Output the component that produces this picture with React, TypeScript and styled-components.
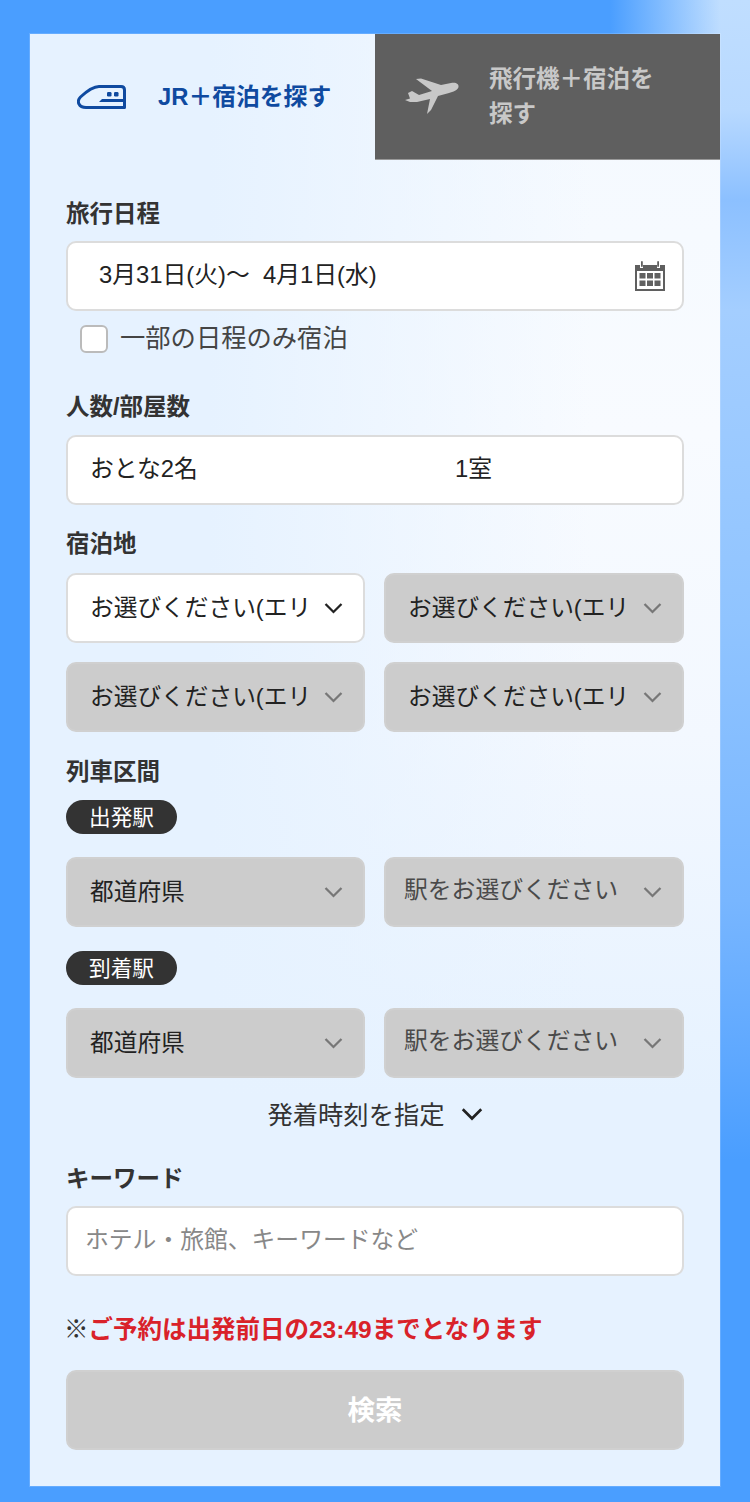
import React from "react";
import styled, { createGlobalStyle } from "styled-components";

const GlobalStyle = createGlobalStyle`
  html, body {
    margin: 0;
    padding: 0;
  }
  body {
    font-family: "Liberation Sans", "Noto Sans CJK JP", sans-serif;
    color: #333;
  }
  * {
    box-sizing: border-box;
  }
  svg {
    flex-shrink: 0;
  }
`;

const TrainIcon = () => (
  <svg width="50" height="26" viewBox="0 0 50 26" fill="none">
    <path
      d="M44 2.500H22C16 2.500 10 7 3.500 13C1 15.500 1 18 2 20C3.500 23 6 23.500 9 23.500H47.500V6C47.500 3.500 46 2.500 44 2.500z"
      stroke="#0f4aa0"
      strokeWidth="3"
      strokeLinejoin="round"
    />
    <path d="M25 15h23v3H22z" fill="#0f4aa0" />
    <rect x="30" y="8" width="4.500" height="4.500" rx="1.200" fill="#0f4aa0" />
    <rect x="37" y="8" width="4.500" height="4.500" rx="1.200" fill="#0f4aa0" />
  </svg>
);

const PlaneIcon = () => (
  <svg width="54" height="38" viewBox="0 0 54 38" fill="#c8c8c8">
    <path d="M11 1L16 .5 36 7l10-2C51 4 54 6 53.500 9 53 12 48 14 44 15l-11 3-7 14-4 4 3-15-13 3H5l-5-2 5-1.500L3 15l4-2 7 4 13-4z" />
  </svg>
);

const CalendarIcon = () => (
  <svg width="30" height="30" viewBox="0 0 30 30">
    <path d="M0 4h5v3h3V4h14v3h3V4h5v26H0z" fill="#5f5f5f" />
    <rect x="6" y="0" width="1.800" height="6" rx="0.900" fill="#5f5f5f" />
    <rect x="22.200" y="0" width="1.800" height="6" rx="0.900" fill="#5f5f5f" />
    <rect x="2" y="10" width="26" height="18" fill="#fff" />
    {[4.500, 12, 19.500].flatMap((x) =>
      [12, 19.500].map((y) => (
        <rect key={`${x}-${y}`} x={x} y={y} width="6" height="5.500" fill="#5f5f5f" />
      ))
    )}
  </svg>
);

const Chevron = ({ color = "#222", width = 19 }: { color?: string; width?: number }) => (
  <svg width={width} height={width * 0.63} viewBox="0 0 19 12" fill="none">
    <path d="M1.500 2l8 8 8-8" stroke={color} strokeWidth="2.300" />
  </svg>
);

const SelectBox = ({ label, disabled, muted }: { label: string; disabled?: boolean; muted?: boolean }) => (
  <Select $disabled={disabled}>
    <SelectText $muted={muted}>{label}</SelectText>
    <Chevron color={disabled ? "#777" : "#222"} />
  </Select>
);

const AREA = "お選びください(エリ";

export default function App() {
  return (
    <Page>
      <GlobalStyle />
      <Panel>
        <Tabs>
          <ActiveTab>
            <TrainIcon />
            <ActiveTabLabel>JR＋宿泊を探す</ActiveTabLabel>
          </ActiveTab>
          <InactiveTab>
            <PlaneIcon />
            <InactiveTabLabel>飛行機＋宿泊を探す</InactiveTabLabel>
          </InactiveTab>
        </Tabs>
        <Form>
          <Label>旅行日程</Label>
          <DateField>
            <FieldText>3月31日(火)～  4月1日(水)</FieldText>
            <CalendarIcon />
          </DateField>
          <CheckRow>
            <CheckBox />
            <CheckLabel>一部の日程のみ宿泊</CheckLabel>
          </CheckRow>

          <PeopleLabel>人数/部屋数</PeopleLabel>
          <PeopleField>
            <PeopleCount>おとな2名</PeopleCount>
            <FieldText>1室</FieldText>
          </PeopleField>

          <AreaLabel>宿泊地</AreaLabel>
          <SelectGrid>
            <SelectBox label={AREA} />
            <SelectBox label={AREA} disabled />
            <SelectBox label={AREA} disabled />
            <SelectBox label={AREA} disabled />
          </SelectGrid>

          <TrainLabel>列車区間</TrainLabel>
          <Pill>出発駅</Pill>
          <SelectGrid>
            <SelectBox label="都道府県" disabled />
            <SelectBox label="駅をお選びください" disabled muted />
          </SelectGrid>
          <ArrivalPill>到着駅</ArrivalPill>
          <SelectGrid>
            <SelectBox label="都道府県" disabled />
            <SelectBox label="駅をお選びください" disabled muted />
          </SelectGrid>

          <TimeToggle>
            <TimeToggleText>発着時刻を指定</TimeToggleText>
            <Chevron width={22} />
          </TimeToggle>

          <KeywordLabel>キーワード</KeywordLabel>
          <KeywordField>
            <FieldText>ホテル・旅館、キーワードなど</FieldText>
          </KeywordField>

          <Notice>
            ※<NoticeRed>ご予約は出発前日の23:49までとなります</NoticeRed>
          </Notice>
          <SearchButton>検索</SearchButton>
        </Form>
      </Panel>
    </Page>
  );
}

const Page = styled.div`
  width: 750px;
  height: 1502px;
  padding: 34px 30px 16px;
  overflow: hidden;
  background:
    linear-gradient(to right, #4a9eff 610px, rgba(74, 158, 255, 0) 720px),
    linear-gradient(
      to bottom,
      #c0deff 0,
      #b8d9ff 110px,
      #8cc0ff 200px,
      #a4ceff 310px,
      #90c4ff 620px,
      #78b6ff 900px,
      #5ea8ff 1060px,
      #4a9eff 1160px
    );
`;

const Panel = styled.div`
  width: 690px;
  height: 1452px;
  box-shadow: 0 0 0 1px rgba(255, 255, 255, 0.15);
  background:
    linear-gradient(to right, #e6f2ff 180px, rgba(230, 242, 255, 0) 560px),
    linear-gradient(to bottom, #f4f9ff 0, #f8fbff 400px, #f3f8ff 700px, #e6f2ff 1060px);
`;

const Tabs = styled.div`
  display: flex;
  height: 126px;
`;

const ActiveTab = styled.div`
  display: flex;
  align-items: center;
  width: 345px;
  padding-left: 47px;
  gap: 31px;
`;

const ActiveTabLabel = styled.span`
  padding-bottom: 5px;
  font-size: 23.800px;
  font-weight: 700;
  color: #0f4aa0;
`;

const InactiveTab = styled.div`
  display: flex;
  align-items: center;
  width: 345px;
  padding-left: 30px;
  gap: 30px;
  background: #5f5f5f;
  border-bottom: 1px solid #999;
`;

const InactiveTabLabel = styled.span`
  width: 180px;
  font-size: 23.500px;
  font-weight: 700;
  line-height: 35px;
  color: #c8c8c8;
`;

const Form = styled.div`
  padding: 37px 36px 0;
`;

const Label = styled.div`
  height: 34px;
  font-size: 23.500px;
  line-height: 34px;
  font-weight: 700;
  color: #333;
`;

const PeopleLabel = styled(Label)`
  margin-top: 30px;
  margin-bottom: 11px;
`;

const AreaLabel = styled(Label)`
  margin-top: 22px;
  margin-bottom: 12px;
`;

const TrainLabel = styled(Label)`
  margin-top: 23px;
  margin-bottom: 11px;
`;

const KeywordLabel = styled(Label)`
  margin-top: 29px;
  margin-bottom: 10px;
`;

const Field = styled.div`
  display: flex;
  align-items: center;
  height: 70px;
  background: #fff;
  border: 2px solid #dcdcdc;
  border-radius: 10px;
  font-size: 23.800px;
  color: #222;
`;

const FieldText = styled.span`
  padding-bottom: 8px;
  white-space: pre;
`;

const DateField = styled(Field)`
  justify-content: space-between;
  margin-top: 10px;
  padding: 0 17px 0 31px;
`;

const CheckRow = styled.label`
  display: flex;
  align-items: center;
  gap: 12px;
  height: 42px;
  margin-top: 7px;
  padding-left: 14px;
  font-size: 25.300px;
  color: #444;
`;

const CheckBox = styled.span`
  width: 28px;
  height: 28px;
  background: #fff;
  border: 2px solid #bbb;
  border-radius: 6px;
`;

const CheckLabel = styled.span`
  padding-bottom: 6px;
`;

const PeopleField = styled(Field)`
  padding-left: 22px;
`;

const PeopleCount = styled(FieldText)`
  width: 365px;
`;

const SelectGrid = styled.div`
  display: grid;
  grid-template-columns: 299px 300px;
  column-gap: 19px;
  row-gap: 19px;
`;

const Select = styled.div<{ $disabled?: boolean }>`
  display: flex;
  align-items: center;
  gap: 8px;
  height: 70px;
  padding: 0 20px 0 22px;
  background: ${(props) => (props.$disabled ? "#cccccc" : "#fff")};
  border: 2px solid ${(props) => (props.$disabled ? "#d0d0d0" : "#dcdcdc")};
  border-radius: 10px;
`;

const SelectText = styled.span<{ $muted?: boolean }>`
  flex: 1;
  min-width: 0;
  padding-bottom: 5px;
  white-space: nowrap;
  font-size: ${(props) => (props.$muted ? "23.800px" : "23.700px")};
  color: ${(props) => (props.$muted ? "#4a4a4a" : "#222")};
  margin-left: ${(props) => (props.$muted ? "-4px" : "0")};
  margin-top: ${(props) => (props.$muted ? "-4px" : "0")};
`;

const Pill = styled.div`
  display: flex;
  align-items: center;
  justify-content: center;
  width: 111px;
  height: 34px;
  margin-bottom: 23px;
  padding-bottom: 4px;
  background: #333;
  border-radius: 17px;
  font-size: 21.700px;
  color: #fff;
`;

const ArrivalPill = styled(Pill)`
  margin-top: 24px;
`;

const TimeToggle = styled.div`
  display: flex;
  align-items: center;
  justify-content: center;
  gap: 16px;
  height: 38px;
  margin-top: 17px;
  font-size: 25.300px;
  color: #333;
`;

const TimeToggleText = styled.span`
  padding-bottom: 3px;
`;

const KeywordField = styled(Field)`
  padding-left: 17px;
  color: #888;
`;

const Notice = styled.div`
  height: 34px;
  margin-top: 37px;
  margin-left: -2px;
  font-size: 24.500px;
  line-height: 34px;
  color: #333;
`;

const NoticeRed = styled.span`
  font-weight: 700;
  color: #d9222a;
`;

const SearchButton = styled.div`
  display: flex;
  align-items: center;
  justify-content: center;
  height: 80px;
  margin-top: 23px;
  padding-bottom: 4px;
  background: #ccc;
  border: 2px solid #d0d0d0;
  border-radius: 10px;
  font-size: 27.500px;
  font-weight: 700;
  color: #fff;
`;
